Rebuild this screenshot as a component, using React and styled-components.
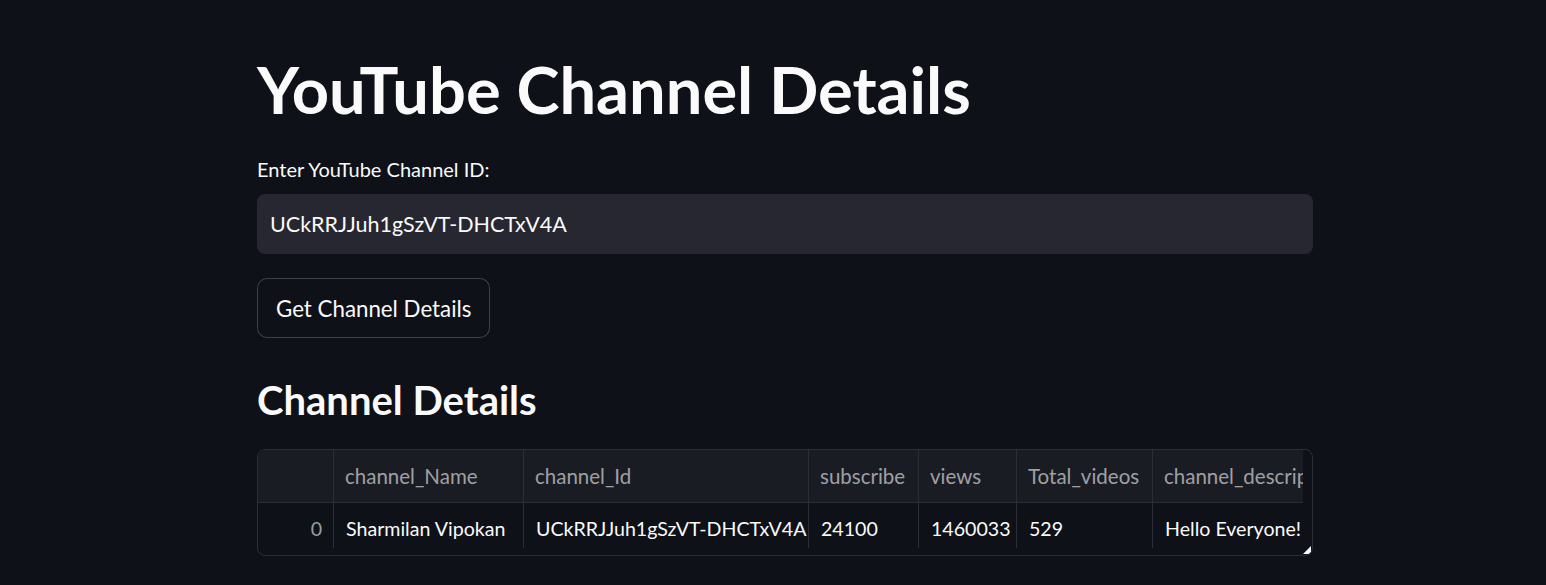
import React from "react";
import styled, { createGlobalStyle } from "styled-components";

const Global = createGlobalStyle`
  html, body {
    margin: 0;
    background: #0e1117;
    font-family: Lato, "Noto Sans", sans-serif;
    color: #fafafa;
  }
`;

const Page = styled.div`
  width: 1546px;
  height: 585px;
  overflow: hidden;
  box-sizing: border-box;
  padding: 47px 233px 0 257px;
  display: flex;
  flex-direction: column;
`;

const Title = styled.h1`
  margin: 0;
  font-size: 65px;
  font-weight: 700;
  line-height: 84px;
`;

const Label = styled.label`
  margin-top: 26px;
  font-size: 20px;
  line-height: 24px;
`;

const Input = styled.div`
  margin-top: 13px;
  height: 60px;
  border-radius: 8px;
  background: #262730;
  display: flex;
  align-items: center;
  padding: 0 13px;
  font-size: 21.5px;
`;

const Button = styled.button`
  margin-top: 24px;
  align-self: flex-start;
  height: 60px;
  padding: 0 18px;
  border-radius: 10px;
  border: 1px solid rgba(250, 250, 250, 0.2);
  background: #0e1117;
  color: #fafafa;
  font-family: inherit;
  font-size: 22.3px;
`;

const Heading = styled.h2`
  margin: 36px 0 0;
  font-size: 40px;
  font-weight: 700;
  line-height: 52px;
`;

const Table = styled.div`
  margin-top: 23px;
  height: 107px;
  box-sizing: border-box;
  border: 1px solid #2b2e37;
  border-radius: 8px;
  overflow: hidden;
  position: relative;
`;

const cols = "75px 190px 285px 110px 98px 136px 151px";

const Row = styled.div`
  display: grid;
  grid-template-columns: ${cols};
  width: 1045px;
  height: ${(p) => (p.$head ? "53px" : "45px")};
  box-sizing: border-box;
  background: ${(p) => (p.$head ? "#1a1c24" : "transparent")};
  border-bottom: ${(p) => (p.$head ? "1px solid #2b2e37" : "none")};
`;

const Cell = styled.div`
  display: flex;
  align-items: center;
  justify-content: ${(p) => (p.$right ? "flex-end" : "flex-start")};
  padding: ${(p) => (p.$head ? "0 11px" : "5px 11px 0 12px")};
  border-left: ${(p) => (p.$first ? "none" : "1px solid #2b2e37")};
  font-size: ${(p) => (p.$head ? "20.5px" : "19.6px")};
  color: ${(p) => (p.$head || p.$index ? "rgba(250,250,250,0.6)" : "#fafafa")};
  white-space: nowrap;
  overflow: hidden;
`;

const Handle = styled.div`
  position: absolute;
  right: 1px;
  bottom: 1px;
  width: 0;
  height: 0;
  border-left: 8px solid transparent;
  border-bottom: 8px solid #fafafa;
`;

const headers = ["channel_Name", "channel_Id", "subscribe", "views", "Total_videos", "channel_descrip"];
const values = ["Sharmilan Vipokan", "UCkRRJJuh1gSzVT-DHCTxV4A", "24100", "1460033", "529", "Hello Everyone!"];

export default function App() {
  return (
    <>
      <Global />
      <Page>
        <Title>YouTube Channel Details</Title>
        <Label>Enter YouTube Channel ID:</Label>
        <Input>UCkRRJJuh1gSzVT-DHCTxV4A</Input>
        <Button>Get Channel Details</Button>
        <Heading>Channel Details</Heading>
        <Table>
          <Row $head>
            <Cell $first $head />
            {headers.map((h) => (
              <Cell key={h} $head>{h}</Cell>
            ))}
          </Row>
          <Row>
            <Cell $first $index $right>0</Cell>
            {values.map((v) => (
              <Cell key={v}>{v}</Cell>
            ))}
          </Row>
          <Handle />
        </Table>
      </Page>
    </>
  );
}
